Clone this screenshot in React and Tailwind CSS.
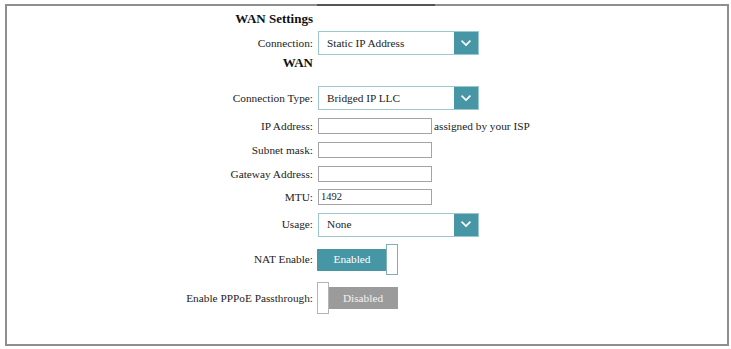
import React from 'react';

const Chevron = () => (
    <svg width="10" height="7" viewBox="0 0 10 7" fill="none">
        <path d="M1.2 1.3 L5 5.1 L8.8 1.3" stroke="#ffffff" strokeWidth="1.8" strokeLinecap="square" />
    </svg>
);

const Label = ({ children, bold }) => (
    <div className={`w-[306px] shrink-0 text-right ${bold ? 'text-[13px] font-bold text-[#111]' : 'text-[11.3px] text-[#222]'}`}>
        {children}
    </div>
);

const Select = ({ value }) => (
    <div className="ml-[5px] flex h-[24px] w-[161px] items-stretch border border-[#9cc7cf] bg-white">
        <div className="flex flex-1 items-center pl-[8px] text-[11.3px] text-[#222]">{value}</div>
        <div className="flex w-[24px] items-center justify-center bg-[#4796a6]">
            <Chevron />
        </div>
    </div>
);

const Input = ({ value }) => (
    <div className="ml-[5px] flex h-[16px] w-[114px] items-center border border-[#a3a3a3] bg-white pl-[2px] text-[10.5px] text-[#222]">
        {value}
    </div>
);

const Row = ({ className, children }) => (
    <div className={`flex items-center ${className}`}>{children}</div>
);

const App = () => {
    return (
        <div className="h-[349px] w-[731px] bg-white font-['Liberation_Serif','Tinos','Times_New_Roman',serif]">
            <div className="relative ml-[5px] mt-[4px] h-[342px] w-[724px] border-2 border-[#8e8e8e]">
                {/* dark tab edge on top border */}
                <div className="absolute -top-[2px] left-[310px] h-[2px] w-[118px] bg-[#555555]" />

                <div className="flex flex-col">
                    <Row className="h-[25px]">
                        <Label bold>WAN Settings</Label>
                    </Row>
                    <Row className="h-[24px]">
                        <Label>Connection:</Label>
                        <Select value="Static IP Address" />
                    </Row>
                    <Row className="h-[16px]">
                        <Label bold>WAN</Label>
                    </Row>
                    <Row className="mt-[15px] h-[24px]">
                        <Label>Connection Type:</Label>
                        <Select value="Bridged IP LLC" />
                    </Row>
                    <Row className="mt-[8px] h-[16px]">
                        <Label>IP Address:</Label>
                        <Input />
                        <span className="ml-[2px] text-[11.3px] text-[#222]">assigned by your ISP</span>
                    </Row>
                    <Row className="mt-[8px] h-[16px]">
                        <Label>Subnet mask:</Label>
                        <Input />
                    </Row>
                    <Row className="mt-[8px] h-[16px]">
                        <Label>Gateway Address:</Label>
                        <Input />
                    </Row>
                    <Row className="mt-[7px] h-[16px]">
                        <Label>MTU:</Label>
                        <Input value="1492" />
                    </Row>
                    <Row className="mt-[7px] h-[25px]">
                        <Label>Usage:</Label>
                        <Select value="None" />
                    </Row>
                    <Row className="mt-[7px] h-[31px]">
                        <Label>NAT Enable:</Label>
                        <div className="ml-[4px] flex items-center">
                            <div className="flex h-[22px] w-[70px] items-center justify-center bg-[#4796a6] text-[11.3px] text-white">
                                Enabled
                            </div>
                            <div className="-ml-px h-[31px] w-[12px] border border-[#7fb0ba] bg-white" />
                        </div>
                    </Row>
                    <Row className="mt-[7px] h-[32px]">
                        <Label>Enable PPPoE Passthrough:</Label>
                        <div className="ml-[4px] flex items-center">
                            <div className="z-10 h-[32px] w-[12px] border border-[#b4b4b4] bg-white" />
                            <div className="-ml-px flex h-[22px] w-[70px] items-center justify-center bg-[#9b9b9b] text-[11.3px] text-[#f2f2f2]">
                                Disabled
                            </div>
                        </div>
                    </Row>
                </div>
            </div>
        </div>
    );
};

export default App;
